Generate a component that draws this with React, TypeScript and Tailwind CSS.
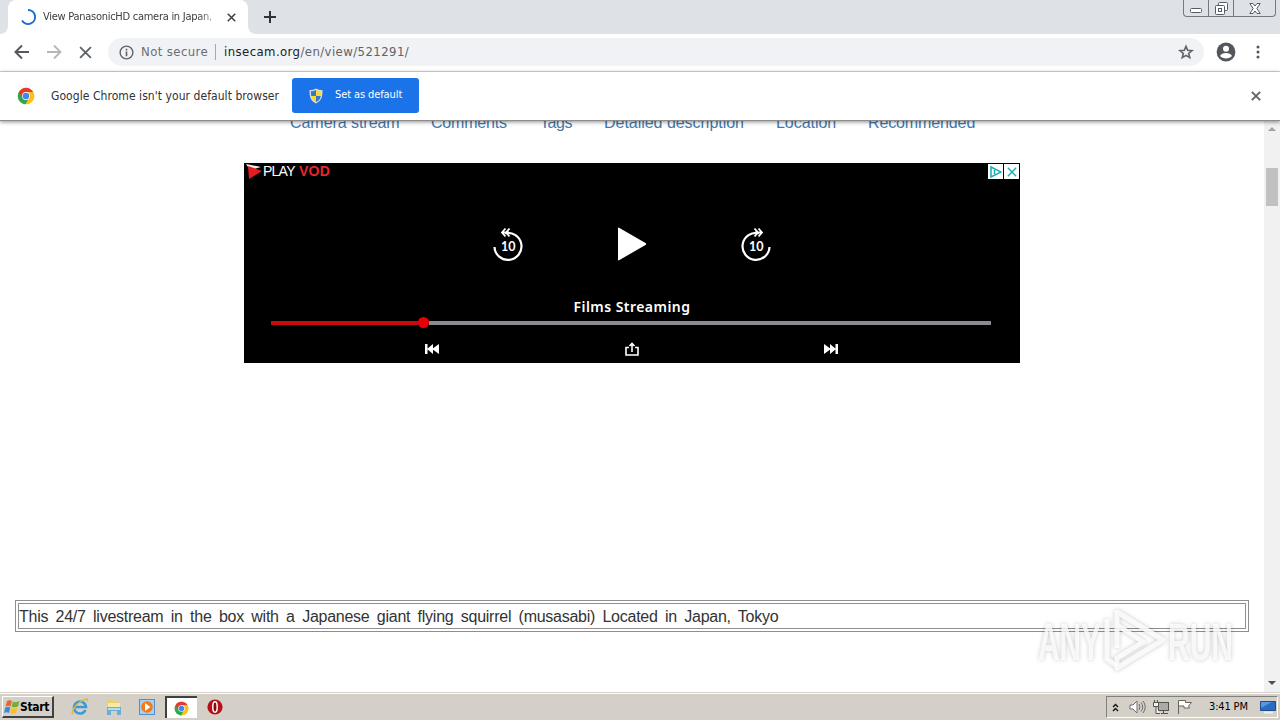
import type { ReactNode } from "react";

const uiFont = "font-['DejaVu_Sans_Condensed','DejaVu_Sans',sans-serif] [font-stretch:condensed]";
const pageFont = "font-['Liberation_Sans',Arial,sans-serif]";

const links = [
  { label: "Camera stream", width: "w-[141px]", tracking: "tracking-[-0.05px]" },
  { label: "Comments", width: "w-[109px]", tracking: "tracking-[-0.2px]" },
  { label: "Tags", width: "w-[64px]", tracking: "tracking-[-0.4px]" },
  { label: "Detailed description", width: "w-[172px]", tracking: "tracking-[-0.03px]" },
  { label: "Location", width: "w-[92px]", tracking: "tracking-[-0.05px]" },
  { label: "Recommended", width: "w-[120px]", tracking: "tracking-[-0.12px]" },
];

function ChromeLogo({ className }: { className?: string }) {
  return (
    <svg viewBox="0 0 24 24" className={className}>
      <circle cx="12" cy="12" r="11" fill="#fbc116" />
      <path d="M2.5 6.5A11 11 0 0 0 11.5 23L16.3 14.5 12 12Z" fill="#2da94f" />
      <path d="M21.5 6.5A11 11 0 0 1 11.5 23L16.8 13.5V7Z" fill="#fbc116" />
      <path d="M12 6.5h9.5A11 11 0 0 0 2.5 6.5l4.7 8Z" fill="#e33b2e" />
      <circle cx="12" cy="12" r="5.2" fill="#fff" />
      <circle cx="12" cy="12" r="4.3" fill="#4285f4" />
    </svg>
  );
}

function Cross({ className, width = 2 }: { className?: string; width?: number }) {
  return (
    <svg viewBox="0 0 12 12" className={className} stroke="currentColor" strokeWidth={width}>
      <path d="M1 1 11 11M11 1 1 11" />
    </svg>
  );
}

function TabStrip() {
  return (
    <div className="flex h-[34px] items-start bg-[#dee1e6]">
      <div className="flex h-full w-2 items-end bg-white">
        <div className="h-full w-full rounded-br-lg bg-[#dee1e6]" />
      </div>
      <div className="flex h-full w-[240px] items-center rounded-t-lg bg-white pl-3">
        <svg viewBox="0 0 16 16" className="h-4 w-4 shrink-0" fill="none" stroke="#1a6fd4" strokeWidth="2">
          <path d="M8 1A7 7 0 1 1 2 11.5" />
        </svg>
        <div className={`${uiFont} ml-[7px] w-[174px] overflow-hidden text-[11px] leading-5 tracking-[-0.27px] whitespace-nowrap text-[#3c4043] [mask-image:linear-gradient(to_right,black_155px,transparent_180px)]`}>
          View PanasonicHD camera in Japan,
        </div>
        <Cross className="ml-[10px] h-[9px] w-[9px] text-[#3c4043]" width={2} />
      </div>
      <div className="h-full w-2 bg-white">
        <div className="h-full w-full rounded-bl-lg bg-[#dee1e6]" />
      </div>
      <svg viewBox="0 0 12 12" className="mt-[11px] ml-2 h-3 w-3" stroke="#2f3338" strokeWidth="2">
        <path d="M6 0V12M0 6H12" />
      </svg>
      <div className="mr-1 ml-auto flex h-[17px] w-[93px] rounded-b-[4px] border border-t-0 border-[#737882]">
        <div className="flex w-[25px] justify-center border-r border-[#737882]">
          <svg viewBox="0 0 12 13" className="h-[13px] w-3" fill="#fff" stroke="#565c66">
            <rect x=".5" y="8.5" width="11" height="4" rx="1" />
          </svg>
        </div>
        <div className="flex w-[25px] justify-center border-r border-[#737882] pt-0.5">
          <svg viewBox="0 0 13 13" className="h-[13px] w-[13px]" fill="#fff" stroke="#565c66">
            <rect x="3.5" y=".5" width="9" height="8" rx="1" />
            <rect x=".5" y="3.5" width="9" height="9" rx="1" />
            <rect x="3.5" y="6.5" width="3" height="3" />
          </svg>
        </div>
        <div className="flex flex-1 justify-center pt-[3px]">
          <svg viewBox="0 0 12 11" className="h-[11px] w-3" fill="#fff" stroke="#565c66">
            <path d="M.8.5H4L6 3 8 .5h3.2L7.8 5.5l3.4 5H8L6 8l-2 2.5H.8l3.4-5Z" />
          </svg>
        </div>
      </div>
    </div>
  );
}

function Toolbar() {
  return (
    <div className="flex h-[38px] items-center border-b border-[#d5d7da] bg-white pb-px pl-[14px]">
      <svg viewBox="0 0 16 16" className="h-4 w-4" fill="none" stroke="#55585c" strokeWidth="2">
        <path d="M15 8H2M8 1.5 1.5 8 8 14.5" />
      </svg>
      <svg viewBox="0 0 16 16" className="ml-4 h-4 w-4" fill="none" stroke="#b5b7ba" strokeWidth="1.8">
        <path d="M1 8h13M8 1.5 14.5 8 8 14.5" />
      </svg>
      <Cross className="ml-[17px] h-[13px] w-[13px] text-[#5f6368]" width={1.7} />
      <div className="ml-4 flex h-7 w-[1096px] items-center rounded-full bg-[#f0f2f5] pr-[10px] pl-[11px]">
        <svg viewBox="0 0 16 16" className="h-[15px] w-[15px]" fill="none" stroke="#5f6368" strokeWidth="1.5">
          <circle cx="8" cy="8" r="6.8" />
          <path d="M8 7v5M8 4v1.8" strokeWidth="1.7" />
        </svg>
        <span className={`${uiFont} ml-[7px] w-[67px] text-[13px] tracking-[0.4px] whitespace-nowrap text-[#6a6e73]`}>
          Not secure
        </span>
        <span className="ml-[7px] h-4 w-px bg-[#a5a8ac]" />
        <span className={`${uiFont} ml-2 text-[13px] tracking-[0.42px] whitespace-nowrap text-[#5f6368]`}>
          <span className="text-[#202124]">insecam.org</span>/en/view/521291/
        </span>
        <svg viewBox="0 0 24 24" className="ml-auto h-4 w-4" fill="none" stroke="#5f6368" strokeWidth="2.4">
          <path d="m12 3.500 2.500 6 6.500.5-5 4.200 1.600 6.300-5.600-3.400-5.600 3.400L8 14.200 3 10l6.500-.5Z" />
        </svg>
      </div>
      <svg viewBox="0 0 20 20" className="ml-3 h-5 w-5">
        <circle cx="10" cy="10" r="9.4" fill="#53575c" />
        <circle cx="10" cy="6.8" r="3" fill="#fff" />
        <path d="M4 14c1.5-4 10.5-4 12 0-2.6 3.3-9.4 3.3-12 0Z" fill="#fff" />
      </svg>
      <svg viewBox="0 0 4 14" className="ml-5 h-[14px] w-1" fill="#53575c">
        <circle cx="2" cy="2" r="1.5" />
        <circle cx="2" cy="7" r="1.5" />
        <circle cx="2" cy="12" r="1.5" />
      </svg>
    </div>
  );
}

function InfoBar() {
  return (
    <div className="relative z-10 flex h-[49px] items-center border-b border-[#8d8d8d] bg-white pb-px pl-[17px] shadow-[0_1px_4px_rgba(0,0,0,0.45)]">
      <ChromeLogo className="h-[18px] w-[18px]" />
      <span className={`${uiFont} ml-4 w-[229px] text-[12px] tracking-[0.06px] whitespace-nowrap text-[#303236]`}>
        Google Chrome isn't your default browser
      </span>
      <button className={`${uiFont} ml-3 flex h-[35px] w-[127px] items-center rounded-[3px] bg-[#1a73e8] pl-4 text-[11px] text-white`}>
        <svg viewBox="0 0 16 16" className="h-4 w-4">
          <path d="M8 .5C6 2 4 2 1.500 2c0 6 .5 10.500 6.500 13.500C14 12.500 14.500 8 14.500 2 12 2 10 2 8 .5Z" fill="#d8dde2" />
          <path d="M8 2C6.500 3 4.500 3.200 2.800 3.200L3.200 8H8Z" fill="#3478c9" />
          <path d="M8 2c1.500 1 3.500 1.200 5.200 1.200L12.800 8H8Z" fill="#f9d931" />
          <path d="M3.200 8C3.800 11 5 12.700 8 14.200V8Z" fill="#f9d931" />
          <path d="M12.800 8C12.200 11 11 12.700 8 14.200V8Z" fill="#3478c9" />
        </svg>
        <span className="ml-[11px] tracking-[-0.1px] whitespace-nowrap">Set as default</span>
      </button>
      <Cross className="mr-[19px] ml-auto h-[10px] w-[10px] text-[#5f6368]" width={2.3} />
    </div>
  );
}

function SkipTen({ forward }: { forward?: boolean }) {
  return (
    <svg viewBox="0 0 32 36" className="h-9 w-8" fill="none" stroke="#fff">
      <g transform={forward ? "translate(32 0) scale(-1 1)" : undefined}>
        <path d="M2.500 21A13.500 13.500 0 1 0 13 7.200" strokeWidth="2.200" />
        <path d="m13.500 2.500-3.500 4 3.500 4M17.500 2.500l-3.500 4 3.500 4M10 6.500h7" strokeWidth="1.800" />
      </g>
      <text x="16.300" y="25" textAnchor="middle" fill="#fff" stroke="none" fontSize="12.500" fontWeight="700" fontFamily="Lato, sans-serif">
        10
      </text>
    </svg>
  );
}

function SkipTrack({ forward }: { forward?: boolean }) {
  return (
    <svg viewBox="0 0 14 10" className="h-[10px] w-[14px]" fill="#fff">
      <g transform={forward ? "translate(14 0) scale(-1 1)" : undefined}>
        <path d="M0 0h2.500v10H0ZM8 0v10L2 5ZM14 0v10L7 5Z" />
      </g>
    </svg>
  );
}

function Advert() {
  return (
    <div className="mx-auto flex h-[200px] w-[776px] flex-col bg-black text-white">
      <div className="flex h-[17px] items-start">
        <svg viewBox="0 0 16 15" className="mt-px ml-[2px] h-[15px] w-4">
          <path d="M0 0 15 3 4 6Z" fill="#eee" />
          <path d="M2 2 16 7 3 15Z" fill="#e51c20" />
        </svg>
        <span className={`${pageFont} ml-[1px] w-[36px] text-[14px] leading-[17px] tracking-[-0.75px]`}>PLAY</span>
        <span className={`${pageFont} w-[34px] text-[14px] leading-[17px] font-bold tracking-[0.2px] text-[#e8252b]`}>VOD</span>
        <div className="mt-px mr-px ml-auto flex gap-px">
          <div className="flex h-[15px] w-[15px] items-center justify-center bg-white">
            <svg viewBox="0 0 12 12" className="h-3 w-3" fill="none" stroke="#18adb8" strokeWidth="1.500">
              <path d="M1 1 11 6 1 11ZM4.500 4v4" />
            </svg>
          </div>
          <div className="flex h-[15px] w-[15px] items-center justify-center bg-white">
            <Cross className="h-[10px] w-[10px] text-[#18adb8]" width={1.7} />
          </div>
        </div>
      </div>
      <div className="mt-[46px] flex h-9 items-center pl-[248px]">
        <SkipTen />
        <svg viewBox="0 0 30 34" className="ml-[93px] h-[34px] w-[30px]" fill="#fff">
          <path d="M1 1.500Q1 0 2.500 1L28.500 16q1.500 1 0 2L2.500 33Q1 34 1 32.500Z" />
        </svg>
        <span className="ml-[93px] flex">
          <SkipTen forward />
        </span>
      </div>
      <div className="mt-[35px] text-center font-['Noto_Sans',sans-serif] text-[14px] leading-5 font-semibold tracking-[0.45px]">
        Films Streaming
      </div>
      <div className="mr-[29px] ml-[27px] flex h-[11px] items-center">
        <div className="h-1 w-[147px] bg-[#c90b10]" />
        <div className="h-[11px] w-[11px] rounded-full bg-[#e50006]" />
        <div className="h-1 flex-1 bg-[#8c8a92]" />
      </div>
      <div className="mt-[14px] flex h-[14px] items-center justify-between pr-[182px] pl-[181px]">
        <SkipTrack />
        <svg viewBox="0 0 14 14" className="h-[14px] w-[14px]" fill="none" stroke="#fff" strokeWidth="1.600">
          <path d="M4 5.500H1v7.500h12V5.500h-3M7 10V2M4.500 4 7 1.500 9.500 4" />
        </svg>
        <SkipTrack forward />
      </div>
    </div>
  );
}

function Watermark() {
  return (
    <svg viewBox="0 0 210 76" className="absolute top-[483px] left-[1031px] h-[76px] w-[210px] [filter:drop-shadow(0_0_2px_rgba(0,0,0,0.26))]">
      <g fill="#fff" fillOpacity=".8" fontFamily="'Liberation Sans', sans-serif" fontSize="52" fontWeight="700">
        <text x="7" y="55.500" textLength="63" lengthAdjust="spacingAndGlyphs">ANY</text>
        <text x="137" y="55.500" textLength="65" lengthAdjust="spacingAndGlyphs">RUN</text>
      </g>
      <g fill="none" stroke="#fff" strokeOpacity=".85" strokeWidth="5" strokeLinejoin="round">
        <path d="M76 15v40l10 7" />
        <path d="M86 44V8L132 36 86 64V54L112 38 86 21" />
      </g>
    </svg>
  );
}

function Page() {
  return (
    <div className="relative flex h-[571px] bg-white">
      <div className="flex min-w-0 flex-1 flex-col overflow-hidden">
        <div className={`${pageFont} -mt-[9px] flex h-[22px] items-center pl-[290px] text-[16px] leading-[22px] text-[#4379ad]`}>
          {links.map((link) => (
            <a key={link.label} className={`${link.width} ${link.tracking} shrink-0 whitespace-nowrap`}>
              {link.label}
            </a>
          ))}
        </div>
        <div className="mt-[29px]">
          <Advert />
        </div>
        <div className="mx-[15px] mt-[237px] h-8 border border-[#8e8e8e] p-[2px]">
          <div className={`${pageFont} h-full border border-[#8e8e8e] text-[16px] leading-[26px] tracking-[-0.26px] [word-spacing:3.200px] whitespace-nowrap text-[#333]`}>
            This 24/7 livestream in the box with a Japanese giant flying squirrel (musasabi) Located in Japan, Tokyo
          </div>
        </div>
      </div>
      <div className="flex w-4 flex-col items-center bg-[#f1f1f1] pt-[6px] pb-[7px]">
        <div className="border-x-4 border-b-4 border-x-transparent border-b-[#a3a3a3]" />
        <div className="mt-[37px] h-[38px] w-3 bg-[#c1c1c1]" />
        <div className="mt-auto border-x-4 border-t-4 border-x-transparent border-t-[#505050]" />
      </div>
      <Watermark />
    </div>
  );
}

function TaskIcon({ children, active }: { children: ReactNode; active?: boolean }) {
  return (
    <div className={active ? "flex h-[22px] w-8 items-center justify-center border-t-2 border-l-2 border-[#404040] bg-white pr-[2px]" : "flex h-[22px] w-8 items-center justify-center"}>
      {children}
    </div>
  );
}

function Taskbar() {
  return (
    <div className="flex h-[28px] items-start border-t border-[#d4d0c8] bg-white pt-px">
      <div className="flex h-[26px] w-full items-center bg-[#d4d0c8]">
        <button className={`${uiFont} ml-[2px] flex h-[22px] w-[52px] items-center border-t border-r-2 border-b-2 border-l border-t-white border-r-[#404040] border-b-[#404040] border-l-white pl-[1px] text-[12px] font-bold text-black`}>
          <svg viewBox="0 0 16 16" className="h-4 w-4 shrink-0">
            <path d="M3 2Q5.500.500 8 2L6.500 7.500Q4 6 1.500 7.500Z" fill="#e9672b" />
            <path d="M9 2.500Q12 4 15.500 2L14 7.500Q11 9 7.500 7.800Z" fill="#70ae3d" />
            <path d="M1.300 8.500Q4 7 6.300 8.500L5 14Q2.500 12.500 0 14Z" fill="#3d8bd4" />
            <path d="M7.300 9Q11 10 13.700 8.500L12 14Q9 15.500 6 14.300Z" fill="#f5c22e" />
          </svg>
          <span className="tracking-[-0.3px]">Start</span>
        </button>
        <div className="ml-[10px] flex gap-[1.700px]">
          <TaskIcon>
            <svg viewBox="0 0 18 18" className="h-[18px] w-[18px]" fill="none">
              <path d="M14.500 12A6 6 0 1 1 15 9H4" stroke="#3b9bd9" strokeWidth="2.600" />
              <path d="M2.500 15.500C-1 16 3 8 9 4s9-4 7-.5" stroke="#dfb83d" strokeWidth="1.500" />
            </svg>
          </TaskIcon>
          <TaskIcon>
            <svg viewBox="0 0 18 18" className="h-[18px] w-[18px]">
              <path d="M2 2h6l1 2h6v5H2Z" fill="#e9cf6e" />
              <path d="M3 5h12v5H3Z" fill="#f8e9a5" />
              <path d="M2 9h14v8h-4v-4H6v4H2Z" fill="#6aaed6" />
              <path d="M3 10h12v2H3Z" fill="#b6ddec" />
            </svg>
          </TaskIcon>
          <TaskIcon>
            <svg viewBox="0 0 16 16" className="h-4 w-4">
              <rect x=".5" y=".5" width="15" height="15" fill="#a8cef0" stroke="#548fc9" />
              <circle cx="8" cy="8" r="5.800" fill="#f07a18" />
              <path d="m6 4 5.500 4L6 12Z" fill="#fff" />
            </svg>
          </TaskIcon>
          <TaskIcon active>
            <ChromeLogo className="h-[15px] w-[15px]" />
          </TaskIcon>
          <TaskIcon>
            <svg viewBox="0 0 16 16" className="h-4 w-4">
              <circle cx="8" cy="8" r="7.600" fill="#b41118" />
              <ellipse cx="8" cy="8" rx="2.200" ry="5.200" fill="#8b080d" stroke="#fff" strokeWidth="1.500" />
            </svg>
          </TaskIcon>
        </div>
        <div className="mr-[2px] ml-auto flex h-[22px] w-[172px] items-center border border-t-[#808080] border-r-white border-b-white border-l-[#808080]">
          <svg viewBox="0 0 7 9" className="ml-[5px] h-[9px] w-[7px]" fill="none" stroke="#111" strokeWidth="1.400">
            <path d="m1 4 2.500-2.500L6 4M1 8l2.500-2.500L6 8" />
          </svg>
          <svg viewBox="0 0 18 16" className="ml-[10px] h-4 w-[18px]" fill="#fff" stroke="#6e6e6e">
            <path d="M1 6h3l4-4v12l-4-4H1Z" />
            <path d="M10 5q2 3 0 6M12 3.500q3.500 4.500 0 9M14 2q4.500 6 0 12" fill="none" />
          </svg>
          <svg viewBox="0 0 17 16" className="ml-[6px] h-4 w-[17px]" fill="#f4f4f4" stroke="#55534e">
            <rect x="5.500" y="3.500" width="10" height="8" fill="#aaa" />
            <path d="M8 14.500h7M10.500 12v2" />
            <path d="M.5 3.500h5v4h-5ZM1.500 1v2M4.500 1v2M3 8v6.500h4" />
          </svg>
          <svg viewBox="0 0 17 16" className="ml-[6px] h-4 w-[17px]" fill="#fff" stroke="#66645f">
            <path d="M2.500 15V1.500h7v2h6l-3 3.500 1 2H8v-2H2.500" />
          </svg>
          <span className={`${uiFont} ml-4 w-[40px] text-[11px] tracking-[-0.15px] whitespace-nowrap text-black`}>3:41 PM</span>
          <svg viewBox="0 0 16 14" className="mr-[1px] ml-auto h-[14px] w-4">
            <path d="M.5 1.500h15v9H.5Z" fill="#286bc3" stroke="#204c8d" />
            <path d="m1 2 11 0L1 8Z" fill="#5797df" />
            <path d="M4 12.500h9" stroke="#eee" strokeWidth="2" />
          </svg>
        </div>
      </div>
    </div>
  );
}

export default function App() {
  return (
    <div className="flex h-[720px] w-[1280px] flex-col overflow-hidden bg-white">
      <TabStrip />
      <Toolbar />
      <InfoBar />
      <Page />
      <Taskbar />
    </div>
  );
}
